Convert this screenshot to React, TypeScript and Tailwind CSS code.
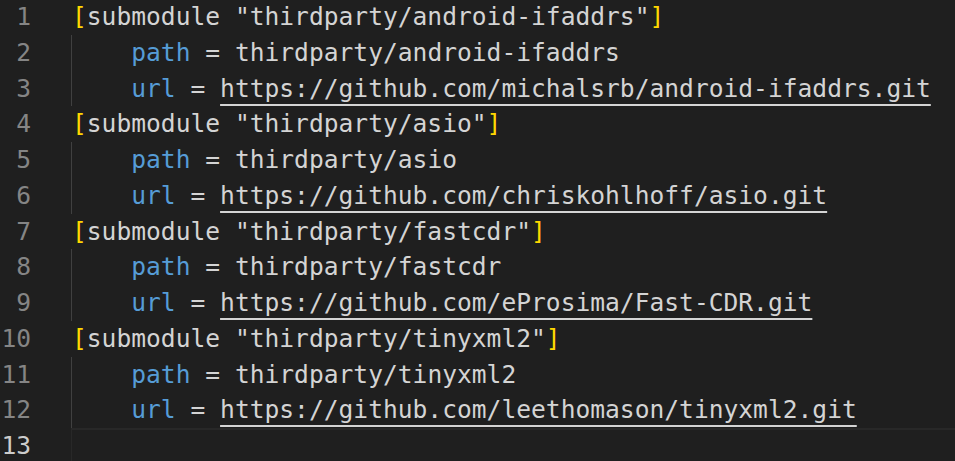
import React from "react";

type Seg = { t: string; c?: "br" | "key" | "url" };
type Line = { segs: Seg[]; guide?: boolean };

const section = (name: string): Line => ({
  segs: [
    { t: "[", c: "br" },
    { t: `submodule "thirdparty/${name}"` },
    { t: "]", c: "br" },
  ],
});

const pathLine = (name: string): Line => ({
  guide: true,
  segs: [{ t: "    " }, { t: "path", c: "key" }, { t: ` = thirdparty/${name}` }],
});

const urlLine = (url: string): Line => ({
  guide: true,
  segs: [{ t: "    " }, { t: "url", c: "key" }, { t: " = " }, { t: url, c: "url" }],
});

const lines: Line[] = [
  section("android-ifaddrs"),
  pathLine("android-ifaddrs"),
  urlLine("https://github.com/michalsrb/android-ifaddrs.git"),
  section("asio"),
  pathLine("asio"),
  urlLine("https://github.com/chriskohlhoff/asio.git"),
  section("fastcdr"),
  pathLine("fastcdr"),
  urlLine("https://github.com/eProsima/Fast-CDR.git"),
  section("tinyxml2"),
  pathLine("tinyxml2"),
  urlLine("https://github.com/leethomason/tinyxml2.git"),
  { segs: [] },
];

const segClass = (c?: Seg["c"]) => {
  if (c === "br") return "text-[#ffd700]";
  if (c === "key") return "text-[#569cd6]";
  if (c === "url")
    return "underline decoration-[#d4d4d4] decoration-2 underline-offset-[7px]";
  return "";
};

export default function App() {
  const active = lines.length - 1;
  return (
    <div className="w-[955px] h-[461px] overflow-hidden bg-[#1f1f1f] text-[#d4d4d4] font-['DejaVu_Sans_Mono',monospace] text-[24.6px]">
      <div className="-mt-px flex flex-col">
        {lines.map((line, i) => (
          <div key={i} className="flex h-[35.75px] leading-[35.75px]">
            <div
              className={`w-[31px] text-right ${
                i === active ? "text-[#cccccc]" : "text-[#858585]"
              }`}
            >
              {i + 1}
            </div>
            <div className="w-[40px]" />
            <div
              className={`flex-1 whitespace-pre ${
                line.guide ? "border-l border-[#404040]" : "border-l border-transparent"
              } ${i === active ? "border-y-2 border-y-[#282828] border-l-[#282828]" : ""}`}
            >
              {line.segs.map((s, j) => (
                <span key={j} className={segClass(s.c)}>
                  {s.t}
                </span>
              ))}
            </div>
          </div>
        ))}
      </div>
    </div>
  );
}
